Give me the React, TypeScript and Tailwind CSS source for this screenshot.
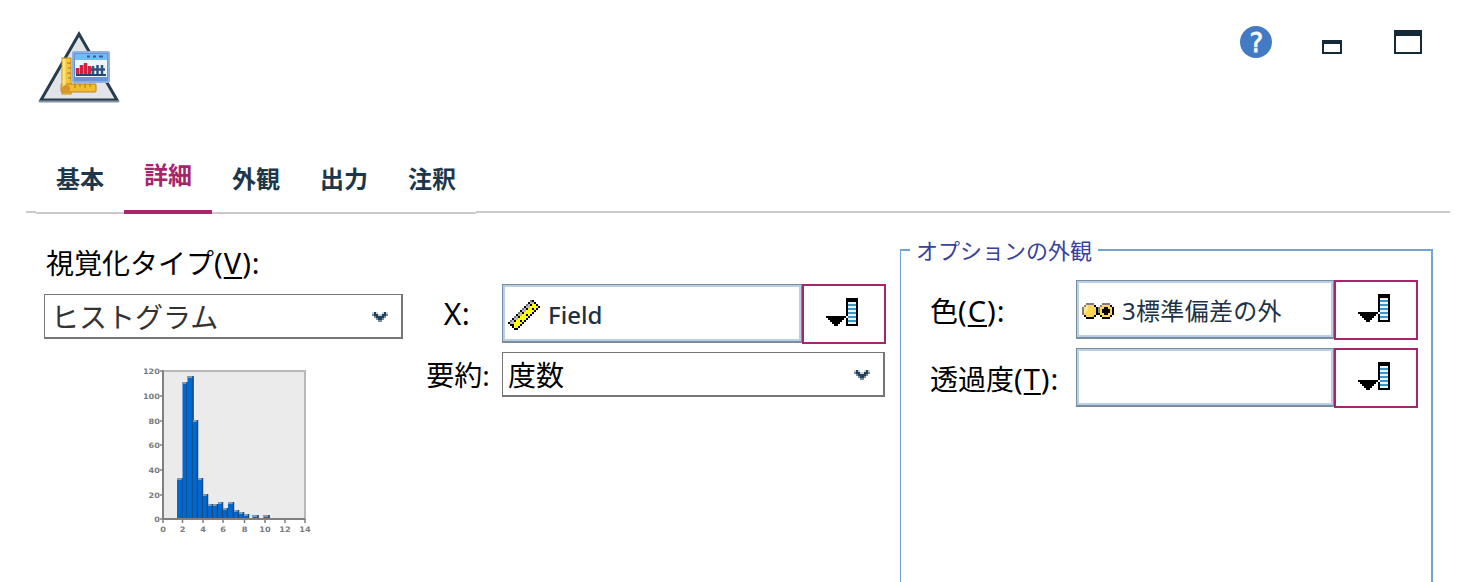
import React from 'react';
import clsx from 'clsx';

// Small bitmap icons, one character per pixel
const RULER = [
  '...........gk...',
  '..........kaak..',
  '.........gakyyk.',
  '........kaayyyyk',
  '.......gakyykyk.',
  '......kaayyyyk..',
  '.....gakyyyyk...',
  '....kaayykyk....',
  '...gakyyyyk.....',
  '..kaayyyyk......',
  '.gakyykyk.......',
  'kaayyyyk........',
  '.kkyyyk.........',
  '..kyyk..........',
  '...kk...........',
];

const NOMINAL = [
  '..gggg....gggg..',
  '.geyyyk..gyyyyk.',
  'geeyyyykgyykkyyk',
  'geeyyyykgykkkkyk',
  'geyyyyykgykkkkyk',
  'gyyyyyykkyykkyyk',
  '.kyyyok..kyyyyk.',
  '..kkkk....kkkk..',
];

const CHEVRON = [
  'ldl..ldl',
  'mddllddm',
  '.mddddm.',
  '..mddm..',
  '...mm...',
];

const PICKER = [
  '..........kkkkkk',
  '..........kkkkkk',
  '..........kwwwwk',
  '..........kbbbbk',
  '..........kwwwwk',
  '..........kbbbbk',
  '..........kwwwwk',
  '..........kbbbbk',
  '..........kwwwwk',
  'kkkkkkkkkk.bbbbk',
  '.kkkkkkkk.kwwwwk',
  '..kkkkkk..kbbbbk',
  '...kkkk...kwwwwk',
  '....kk....kkkkkk',
];

type Palette = Record<string, string>;

const RULER_COLORS: Palette = { k: '#000000', g: '#777777', a: '#b8b4c0', y: '#ffff00' };
const NOMINAL_COLORS: Palette = { k: '#000000', g: '#808080', y: '#ffd65a', e: '#ffe79a', o: '#efb93c' };
const CHEVRON_COLORS: Palette = { d: '#22405a', m: '#7b8e9d', l: '#cdd5db' };
const PICKER_COLORS: Palette = { k: '#000000', w: '#e9f5fb', b: '#3398cc' };

const PixelIcon: React.FC<{ rows: string[]; colors: Palette; className?: string }> = ({ rows, colors, className }) => (
  <svg
    width={rows[0].length * 2}
    height={rows.length * 2}
    viewBox={`0 0 ${rows[0].length} ${rows.length}`}
    shapeRendering="crispEdges"
    className={clsx('shrink-0', className)}
  >
    {rows.map((row, y) =>
      row.split('').map((c, x) =>
        colors[c] ? <rect key={`${x}-${y}`} x={x} y={y} width={1} height={1} fill={colors[c]} /> : null
      )
    )}
  </svg>
);

const GraphboardLogo = () => (
  <svg width="82" height="74" viewBox="0 0 82 74">
    <path d="M41 5 L79 71 H3 Z" fill="#e1e5e9" stroke="#263d50" strokeWidth="3" strokeLinejoin="miter" />
    <path d="M1 72.5 H81" stroke="#8795a2" strokeWidth="2" />
    <rect x="24" y="29" width="9" height="36" fill="#f4c53f" stroke="#c48e1e" />
    <rect x="23" y="55" width="35" height="8" rx="1" fill="#f2bd34" stroke="#b98217" />
    <path d="M26 30 V58" stroke="#ffe37b" strokeWidth="3" />
    <path d="M29 34 H33 M30 39 H33 M29 44 H33 M30 49 H33" stroke="#a8761c" />
    <path d="M37 55 V59 M42 55 V58 M47 55 V59 M52 55 V58" stroke="#a8761c" />
    <circle cx="28" cy="60" r="4" fill="#d7952a" />
    <rect x="35" y="23" width="36" height="30" rx="1" fill="#6595d6" stroke="#91afe0" strokeWidth="2" />
    <rect x="37" y="25" width="32" height="6" fill="#6fbdf8" />
    <path d="M49 27.5 H52 M55 27.5 H58 M61 27.5 H65" stroke="#315e95" strokeWidth="2" />
    <rect x="37" y="31" width="32" height="17" fill="#edf5ff" />
    <path d="M39.5 45 V39 M43.5 45 V36 M47.5 45 V34 M51.5 45 V37" stroke="#d3203f" strokeWidth="3.5" />
    <path d="M55 46 V37 M59.5 46 V36 M64 46 V36 M53 40.5 H67" stroke="#31517e" strokeWidth="2.5" />
    <path d="M38 46 H68" stroke="#23456f" strokeWidth="2" />
  </svg>
);

// x, width and top of each bar, in chart pixels
const BARS = [
  [33, 6, 112], [38.5, 5, 16], [43.5, 6, 10], [49, 5, 54], [54, 5, 112], [59, 5, 128],
  [64, 5, 138], [69, 5, 138], [74, 5, 136], [79, 5, 142], [84, 6, 136], [90, 5, 144],
  [95, 5, 146], [100, 5, 148], [108.5, 6, 149], [119.5, 6, 149],
];
const Y_TICKS: [number, string][] = [
  [5, '120'], [30, '100'], [55, '80'], [79, '60'], [104, '40'], [129, '20'], [153, '0'],
];
const X_TICKS: [number, string][] = [
  [19, '0'], [38.5, '2'], [59, '4'], [79, '6'], [100.5, '8'], [121, '10'], [141, '12'], [161, '14'],
];

const HistogramPreview = () => (
  <svg width="172" height="170" viewBox="0 0 172 170">
    <rect x="19" y="5" width="142" height="148" fill="#ebebeb" stroke="#b7b9b8" strokeWidth="2" />
    {BARS.map(([x, w, top]) => (
      <g key={x}>
        <rect x={x} y={top} width={w} height={153 - top} fill="#0267ce" />
        <path d={`M${x} ${top + 1} H${x + w}`} stroke="#8098b0" strokeWidth="2" />
        <path d={`M${x + w - 0.5} ${top} V153`} stroke="#164b83" strokeWidth="1.5" />
      </g>
    ))}
    <path d="M19 5 V153 H161" fill="none" stroke="#808080" strokeWidth="2" />
    <g className="font-['DejaVu_Sans'] text-[7.5px] font-bold" fill="#7c7c7c">
      {Y_TICKS.map(([y, label]) => (
        <g key={label}>
          <path d={`M16 ${y} H20`} stroke="#808080" strokeWidth="1.5" />
          <text x="16" y={y + 3} textAnchor="end" textLength={label.length * 5.7} lengthAdjust="spacingAndGlyphs">{label}</text>
        </g>
      ))}
      {X_TICKS.map(([x, label]) => (
        <g key={label}>
          <path d={`M${x} 153 V157`} stroke="#808080" strokeWidth="1.5" />
          <text x={x} y="166" textAnchor="middle" textLength={label.length * 5.7} lengthAdjust="spacingAndGlyphs">{label}</text>
        </g>
      ))}
    </g>
  </svg>
);

const TABS = ['基本', '詳細', '外観', '出力', '注釈'];

const Tabs: React.FC<{ active: string }> = ({ active }) => (
  <nav className="flex items-start pl-[26px] pr-6">
    <div className="mt-[61px] h-0.5 w-2.5 bg-[#c9c9c9]" />
    {TABS.map((tab) => (
      <button
        key={tab}
        className={clsx(
          'flex h-16 w-[88px] items-center justify-center text-2xl leading-none font-bold',
          tab === active
            ? 'border-b-4 border-[#a8246c] pb-2.5 text-[#a8246c]'
            : 'border-b-2 border-[#c9c9c9] pb-1 text-[#1d364a]'
        )}
      >
        {tab}
      </button>
    ))}
    <div className="mt-[61px] h-0.5 flex-1 bg-[#c9c9c9]" />
  </nav>
);

const Select: React.FC<{ value: string; className?: string }> = ({ value, className }) => (
  <button
    className={clsx(
      'flex h-[45px] items-center justify-between border border-r-2 border-b-2 border-[#767676] bg-white pt-0.5 pr-[13px] text-[28px] leading-none',
      className
    )}
  >
    <span>{value}</span>
    <PixelIcon rows={CHEVRON} colors={CHEVRON_COLORS} />
  </button>
);

const FieldPicker: React.FC<{ className?: string; children?: React.ReactNode }> = ({ className, children }) => (
  <div className="flex items-start">
    <div className={clsx('h-[59px] border border-b-2 border-[#7b8c9d]', className)}>
      <div className="flex h-full items-center border-2 border-[#b8cfe5] pt-1 pl-[3px] text-2xl leading-none text-[#1d3244]">
        {children}
      </div>
    </div>
    <button className="flex h-[60px] w-[84px] items-start border-2 border-[#a8246c] pt-3 pl-[22px]">
      <PixelIcon rows={PICKER} colors={PICKER_COLORS} />
    </button>
  </div>
);

const Mnemonic: React.FC<{ text: string; char: string }> = ({ text, char }) => (
  <span className="whitespace-nowrap">
    {text}
    <span className="text-[29px] tracking-[1px]">
      (<span className="underline decoration-2 underline-offset-[3px]">{char}</span>):
    </span>
  </span>
);

const App: React.FC = () => {
  return (
    <div className="flex h-[582px] w-[1474px] flex-col overflow-hidden bg-white font-['Noto_Sans','Noto_Sans_CJK_JP',sans-serif] text-black">
      <header className="flex h-[150px] shrink-0 items-start justify-between pt-[26px] pr-[52px] pl-[38px]">
        <div className="pt-[3px]">
          <GraphboardLogo />
        </div>
        <div className="flex items-start">
          <svg width="32" height="32" viewBox="0 0 32 32">
            <circle cx="16" cy="16" r="16" fill="#427ac3" />
            <text
              x="16"
              y="25.5"
              textAnchor="middle"
              fill="#f5f8fc"
              stroke="#f5f8fc"
              strokeWidth="0.8"
              className="font-['DejaVu_Sans_Mono'] text-[26px]"
            >
              ?
            </text>
          </svg>
          <div className="mt-3.5 ml-[50px] h-3.5 w-5 border-2 border-t-4 border-[#142a38]" />
          <div className="mt-1 ml-[52px] h-6 w-7 border-2 border-t-6 border-[#142a38]" />
        </div>
      </header>

      <Tabs active="詳細" />

      <main className="flex flex-1 items-start pl-11 text-[28px] leading-none">
        <section className="flex w-[359px] flex-col pt-[34px]">
          <div className="flex h-[46px] items-start pl-0.5">
            <Mnemonic text="視覚化タイプ" char="V" />
          </div>
          <Select value="ヒストグラム" className="w-full pl-1.5 text-[#333333]" />
          <div className="mt-[27px] pl-[100px]">
            <HistogramPreview />
          </div>
        </section>

        <section className="grid grid-cols-[84px_384px] items-center gap-y-2 pt-[70px] pl-[15px]">
          <div className="pr-1.5 text-center text-[30px] tracking-[0.5px]">X:</div>
          <FieldPicker className="w-[300px]">
            <PixelIcon rows={RULER} colors={RULER_COLORS} />
            <span className="ml-2 font-medium">Field</span>
          </FieldPicker>
          <div className="pr-1 text-center whitespace-nowrap">要約:</div>
          <Select value="度数" className="w-[383px] pl-[5px]" />
        </section>

        <fieldset className="mt-[24px] ml-[14px] h-[400px] w-[533px] border-t-2 border-r-2 border-l border-[#73a3d1] pl-[9px]">
          <legend className="h-6 px-1.5 text-[22px] leading-6 text-[#38429a]">オプションの外観</legend>
          <div className="grid grid-cols-[146px_342px] items-center gap-y-2 pt-[18px] pl-5">
            <Mnemonic text="色" char="C" />
            <FieldPicker className="w-[258px]">
              <PixelIcon rows={NOMINAL} colors={NOMINAL_COLORS} />
              <span className="ml-2 tracking-[0.3px] whitespace-nowrap">3標準偏差の外</span>
            </FieldPicker>
            <Mnemonic text="透過度" char="T" />
            <FieldPicker className="w-[258px]" />
          </div>
        </fieldset>
      </main>
    </div>
  );
};

export default App;
